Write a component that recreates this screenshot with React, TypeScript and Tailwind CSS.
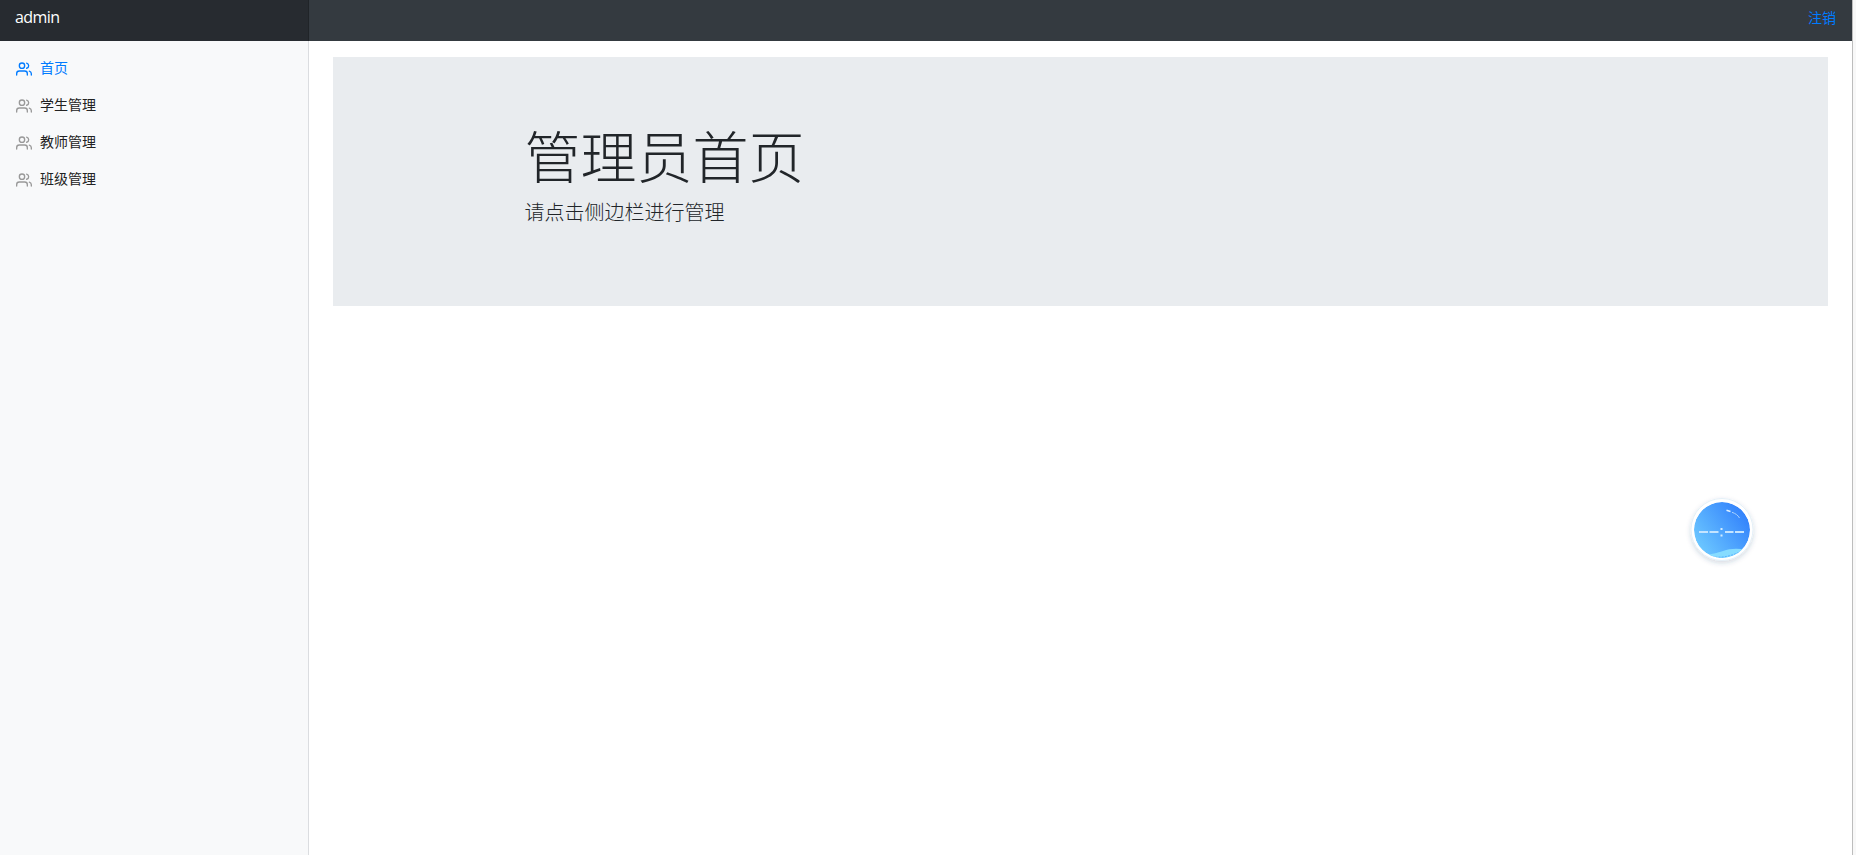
import React from 'react';
import { FiUsers } from 'react-icons/fi';

const navLinks = [
  { path: '#home', label: '首页', active: true },
  { path: '#students', label: '学生管理', active: false },
  { path: '#teachers', label: '教师管理', active: false },
  { path: '#classes', label: '班级管理', active: false },
];

const App = () => {
  return (
    <div className="flex h-[855px] w-full overflow-hidden bg-[#f8f8f8] font-['Open_Sans','Noto_Sans_CJK_SC',sans-serif] text-[#212529]">
      <div className="flex flex-1 flex-col bg-white">
        <Navbar />
        <div className="flex flex-1">
          <Sidebar />
          <main className="flex-1 px-6 pt-4">
            <Jumbotron />
          </main>
        </div>
      </div>
      <div className="w-px bg-[#bdbdbd]" />
      <div className="w-[3px]" />
      <FloatingBall />
    </div>
  );
};

const Navbar = () => (
  <nav className="flex h-[41px] bg-[#343a40]">
    <a href="#home" className="w-[309px] border-r border-[#202428] bg-[#272b30] pt-[5px] pl-[15px] text-base leading-6 tracking-[-0.6px] text-white">
      admin
    </a>
    <a href="#logout" className="mt-[7px] mr-4 ml-auto text-sm leading-[21px] text-[#007bff]">
      注销
    </a>
  </nav>
);

const Sidebar = () => (
  <aside className="w-[309px] border-r border-[#dbdde0] bg-[#f8f9fa] pt-2">
    {navLinks.map((link) => (
      <a
        key={link.path}
        href={link.path}
        className={`flex h-[37px] items-center pl-4 text-sm ${link.active ? 'text-[#007bff]' : 'text-[#222]'}`}
      >
        <FiUsers className={`mt-[2px] mr-2 h-4 w-4 ${link.active ? '' : 'text-[#999]'}`} />
        {link.label}
      </a>
    ))}
  </aside>
);

const Jumbotron = () => (
  <section className="h-[249px] bg-[#e9ecef] pt-[66px]">
    <div className="mx-auto w-[1140px] px-[14px]">
      <h1 className="mb-2 text-[56px] leading-[67px] font-light">管理员首页</h1>
      <p className="text-xl leading-[30px] font-light">请点击侧边栏进行管理</p>
    </div>
  </section>
);

const FloatingBall = () => (
  <svg className="absolute top-[490px] left-[1682px]" width="80" height="80" viewBox="0 0 80 80" fill="none">
    <defs>
      <linearGradient id="ball" x1="18" y1="56" x2="62" y2="24" gradientUnits="userSpaceOnUse">
        <stop stopColor="#6ac5ff" />
        <stop offset="1" stopColor="#3484fc" />
      </linearGradient>
      <clipPath id="ballClip">
        <circle cx="40" cy="40" r="28" />
      </clipPath>
      <filter id="ballShadow" x="0" y="0" width="80" height="80" filterUnits="userSpaceOnUse">
        <feDropShadow dx="0" dy="2" stdDeviation="2.5" floodColor="#2a4a70" floodOpacity="0.2" />
      </filter>
    </defs>
    <circle cx="40" cy="39.5" r="31" fill="#ffffff" stroke="#e4f0f8" strokeWidth="1" filter="url(#ballShadow)" />
    <g clipPath="url(#ballClip)">
      <circle cx="40" cy="40" r="28" fill="url(#ball)" />
      <path d="M20 66C30 64 35 63 41 61C48 58.5 56 58 64 60V70H20Z" fill="#86dcff" />
      <path d="M30 67C42 68 49 66 60 61" stroke="#4da4ff" strokeWidth="0.8" strokeDasharray="2 1.2" />
    </g>
    <path d="M44.5 20.3L48.5 21.5" stroke="#e0f2ff" strokeWidth="1.5" />
    <path d="M50 22.3C53.5 23.5 56 25.3 57.5 28" stroke="#a9d3ff" strokeWidth="1" />
    <path d="M17 42H26M27.5 42H36.5M43 42H51.5M53 42H62" stroke="#c4e4ff" strokeWidth="2" />
    <path d="M39.5 38V40M39.5 44.5V46.5" stroke="#d4ecff" strokeWidth="2" />
  </svg>
);

export default App;
